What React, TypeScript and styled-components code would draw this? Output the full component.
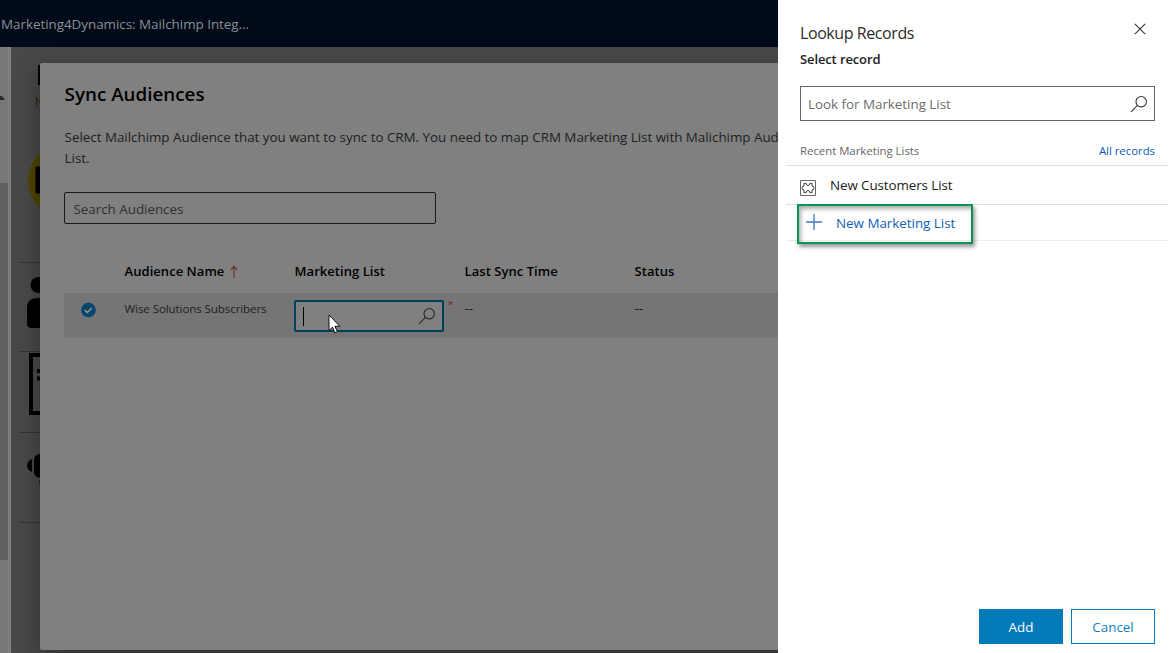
import React from 'react';
import styled, { createGlobalStyle } from 'styled-components';

const Global = createGlobalStyle`
  *, *::before, *::after { box-sizing: border-box; }
  body { margin: 0; overflow: hidden; }
  svg { display: block; flex: none; }
`;

const Page = styled.div`
  display: flex;
  width: 1170px;
  height: 653px;
  overflow: hidden;
  font-family: 'Open Sans', 'Noto Sans', sans-serif;
  font-size: 13.4px;
  letter-spacing: -0.02px;
  white-space: nowrap;
`;

const Workspace = styled.div`
  position: relative;
  display: flex;
  flex-direction: column;
  width: 778px;
  overflow: hidden;
  background: #484848;
`;

const TopBar = styled.header`
  display: flex;
  align-items: center;
  flex: none;
  height: 47px;
  padding: 0 0 0 1px;
  background: #000a18;
  color: #8c8f93;
`;

const Body = styled.div`
  display: flex;
  flex: 1;
`;

const ScrollRail = styled.div`
  width: 11px;
  padding-top: 49px;
  background: #787878;
  border-right: 3px solid #808080;
`;

const RailArrow = styled.div`
  width: 5px;
  height: 4px;
  background: #2b2b2b;
  clip-path: polygon(0 0, 40% 0, 100% 100%, 0 100%);
`;

const RailThumb = styled.div`
  width: 8px;
  height: 377px;
  margin-top: 83px;
  background: #606060;
`;

const SideList = styled.div`
  display: flex;
  flex-direction: column;
  width: 29px;
  padding-left: 8px;
`;

const SideItem = styled.div<{ $height: number }>`
  flex: none;
  height: ${(p) => p.$height}px;
  border-bottom: 1px solid #343434;
`;

const Dialog = styled.section`
  position: absolute;
  left: 40px;
  top: 63px;
  width: 760px;
  height: 587px;
  padding: 18px 0 0 24px;
  border-radius: 2px;
  background: #808080;
  box-shadow: 0 6px 22px rgba(0, 0, 0, 0.35);
  color: #000;
`;

const DialogTitle = styled.h1`
  margin: 0;
  padding-left: 0.6px;
  font-size: 18.8px;
  font-weight: 600;
  line-height: 26px;
  letter-spacing: 0.01px;
`;

const Description = styled.p`
  margin: 20px 0 0;
  padding-left: 0.6px;
  color: #1d1f21;
  line-height: 21px;
`;

const AudienceSearch = styled.div`
  display: flex;
  align-items: center;
  width: 372px;
  height: 32px;
  margin-top: 23px;
  padding: 2px 8px 0 8.5px;
  border: 1px solid #191919;
  border-radius: 2px;
  color: #2f2f2f;
`;

const GridHead = styled.div`
  display: grid;
  grid-template-columns: 60px 170px 170px 170px 1fr;
  height: 69px;
  padding: 37px 0 0 0.6px;
  font-size: 13px;
  font-weight: 600;
  line-height: 20px;
  letter-spacing: 0.04px;
`;

const HeadCell = styled.div<{ $start?: number }>`
  display: flex;
  gap: 6px;
  grid-column-start: ${(p) => p.$start ?? 'auto'};
`;

const GridRow = styled.div`
  display: grid;
  grid-template-columns: 60px 170px 170px 170px 1fr;
  height: 45px;
  background: #757575;
`;

const CheckCell = styled.div`
  padding: 9px 0 0 16px;
`;

const NameCell = styled.div`
  padding: 6px 0 0 0.5px;
  color: #1f1f1f;
  font-size: 11.6px;
  line-height: 20px;
  letter-spacing: -0.11px;
`;

const ValueCell = styled.div`
  padding: 5px 0 0 0.5px;
  color: #151515;
  line-height: 20px;
`;

const FieldCell = styled.div`
  display: flex;
  gap: 4px;
  padding-top: 7px;
`;

const LookupField = styled.div`
  display: flex;
  align-items: center;
  justify-content: space-between;
  width: 150px;
  height: 32px;
  padding: 0 6px 0 7px;
  border: 2px solid #003e5d;
  border-radius: 2px;
  background: #808080;
`;

const Caret = styled.span`
  width: 1px;
  height: 19px;
  background: #000;
`;

const Required = styled.span`
  margin-top: -2px;
  color: #7a1a20;
  font-size: 9.5px;
  line-height: 14px;
`;

const Pointer = styled.div`
  position: absolute;
  left: 288px;
  top: 251px;
`;

const Drawer = styled.aside`
  display: flex;
  flex-direction: column;
  width: 392px;
  padding-right: 1px;
  background: #fff;
  color: #212121;
`;

const DrawerHead = styled.div`
  display: flex;
  justify-content: space-between;
  padding: 21px 23px 0 22px;
  svg { margin-top: 1px; }
`;

const DrawerTitle = styled.h2`
  margin: 0;
  color: #2b2b2b;
  font-size: 16px;
  font-weight: 400;
  line-height: 24px;
  letter-spacing: -0.42px;
`;

const DrawerSubtitle = styled.div`
  margin-top: 4px;
  font-size: 13px;
  font-weight: 600;
  line-height: 20px;
  letter-spacing: -0.12px;
`;

const RecordSearch = styled.div`
  display: flex;
  align-items: center;
  justify-content: space-between;
  height: 35px;
  margin: 17px 14px 0 22px;
  padding: 0 6px 0 7px;
  border: 1px solid #666;
  color: #6c6c6c;
`;

const RecentBar = styled.div`
  display: flex;
  align-items: center;
  justify-content: space-between;
  height: 45px;
  margin-left: 8px;
  padding: 15px 14px 0 14px;
  border-bottom: 1px solid #e1e1e1;
  color: #666;
  font-size: 11.4px;
`;

const Link = styled.a`
  color: #0a5ab4;
`;

const Records = styled.div`
  margin-left: 8px;
`;

const RecordRow = styled.div`
  display: flex;
  align-items: center;
  gap: 14px;
  height: 39px;
  padding-left: 14px;
  border-bottom: 1px solid #e1e1e1;
  color: #212121;
  letter-spacing: -0.09px;
  svg { margin-top: 5px; }
`;

const NewRecordRow = styled.div`
  position: relative;
  display: flex;
  align-items: center;
  gap: 14px;
  height: 36px;
  padding-left: 20px;
  border-bottom: 1px solid #ededed;
  color: #1160b7;
  svg { margin-top: -1px; }
`;

const Highlight = styled.div`
  position: absolute;
  left: 11px;
  top: -1px;
  width: 176px;
  height: 40px;
  border: 2px solid #079551;
  box-shadow: 2px 3px 4px rgba(0, 0, 0, 0.4), inset 2px 3px 4px rgba(0, 0, 0, 0.33);
`;

const Footer = styled.div`
  display: flex;
  justify-content: flex-end;
  gap: 8px;
  margin-top: auto;
  padding: 0 14px 9px;
`;

const Button = styled.button<{ $primary?: boolean }>`
  width: 84px;
  height: 35px;
  padding: 1px 0 0;
  border: 1px solid #007ab8;
  background: ${(p) => (p.$primary ? '#007ab8' : '#fff')};
  color: ${(p) => (p.$primary ? '#fff' : '#0f7ebb')};
  font: inherit;
  letter-spacing: -0.02px;
`;

const Magnifier = ({ color }: { color: string }) => (
  <svg width="18" height="18" viewBox="0 0 18 18" fill="none" stroke={color} strokeWidth="1.1">
    <circle cx="11.2" cy="6.7" r="5.2" />
    <path d="M7.5 10.4 1 16.9" />
  </svg>
);

const SideArt = styled.svg`
  position: absolute;
  left: 27px;
  top: 63px;
`;

const SideGlyphs = () => (
  <SideArt width="13" height="440" viewBox="27 63 13 440">
    <path d="M38 65h2v20h-2z" fill="#050505" />
    <path d="M36.500 107V97.500L40 103" fill="none" stroke="#33270e" strokeWidth="1.2" />
    <circle cx="65.500" cy="180.500" r="37.500" fill="#4d4500" />
    <path d="M35.500 166.500h5v27h-5z" fill="#000" />
    <circle cx="38.500" cy="285" r="8" fill="#000" />
    <path d="M27 308q0-10 10-10h4v30h-9q-5 0-5-5z" fill="#000" />
    <path d="M40 355H31v58h9M37 371h4M37 378.500h4" fill="none" stroke="#000" strokeWidth="4" />
    <path d="M32 459q-5 2.500-5 6.500t5 6.500z" fill="#000" />
    <path d="M40 454q-6 1-6 6v12q0 5 6 6z" fill="#000" />
    <path d="M39 480h1v6z" fill="#222" />
  </SideArt>
);

export default function App() {
  return (
    <Page>
      <Global />
      <Workspace>
        <TopBar>Marketing4Dynamics: Mailchimp Integ...</TopBar>
        <Body>
          <ScrollRail>
            <RailArrow />
            <RailThumb />
          </ScrollRail>
          <SideList>
            <SideItem $height={216} />
            <SideItem $height={89} />
            <SideItem $height={81} />
            <SideItem $height={90} />
          </SideList>
        </Body>
        <SideGlyphs />
        <Dialog>
          <DialogTitle>Sync Audiences</DialogTitle>
          <Description>
            Select Mailchimp Audience that you want to sync to CRM. You need to map CRM Marketing List with Malichimp
            Audience
            <br />
            List.
          </Description>
          <AudienceSearch>Search Audiences</AudienceSearch>
          <GridHead>
            <HeadCell $start={2}>
              Audience Name
              <svg width="8" height="20" viewBox="0 0 8 20" fill="none" stroke="#6e3418" strokeWidth="1.2">
                <path d="M4 17V5.500M1 8.500l3-3.200 3 3.200" />
              </svg>
            </HeadCell>
            <HeadCell>Marketing List</HeadCell>
            <HeadCell>Last Sync Time</HeadCell>
            <HeadCell>Status</HeadCell>
          </GridHead>
          <GridRow>
            <CheckCell>
              <svg width="17" height="17" viewBox="0 0 17 17">
                <circle cx="8.400" cy="8" r="8.300" fill="#808080" />
                <circle cx="8.400" cy="8" r="7.500" fill="#0a476b" />
                <path d="m4.800 8 2.500 2.500 4.500-4.600" fill="none" stroke="#9a9a9a" strokeWidth="1.500" />
              </svg>
            </CheckCell>
            <NameCell>Wise Solutions Subscribers</NameCell>
            <FieldCell>
              <LookupField>
                <Caret />
                <Magnifier color="#262626" />
              </LookupField>
              <Required>*</Required>
            </FieldCell>
            <ValueCell>--</ValueCell>
            <ValueCell>--</ValueCell>
          </GridRow>
          <Pointer>
            <svg width="13" height="20" viewBox="0 0 13 20">
              <path
                d="M1 1v15.500l3.500-3.300 2.400 5.600 2.500-1.100-2.400-5.400h4.800z"
                fill="#fff"
                stroke="#111"
                strokeWidth="1"
              />
            </svg>
          </Pointer>
        </Dialog>
      </Workspace>
      <Drawer>
        <DrawerHead>
          <div>
            <DrawerTitle>Lookup Records</DrawerTitle>
            <DrawerSubtitle>Select record</DrawerSubtitle>
          </div>
          <svg width="12" height="14" viewBox="0 0 12 14" fill="none" stroke="#333" strokeWidth="1.100">
            <path d="m.8 1.800 10.400 10.400M11.200 1.800.8 12.200" />
          </svg>
        </DrawerHead>
        <RecordSearch>
          Look for Marketing List
          <Magnifier color="#333" />
        </RecordSearch>
        <RecentBar>
          Recent Marketing Lists
          <Link>All records</Link>
        </RecentBar>
        <Records>
          <RecordRow>
            <svg width="16" height="16" viewBox="0 0 16 16" fill="none" stroke="#666">
              <path d="M.5.500h15v15H.500z" />
              <path
                d="M4 3.500h2.300q-.5 2 1.700 2t1.700-2H12v2.600q2-.4 2 1.900t-2 1.900v2.600H9.700q.5-2-1.700-2t-1.700 2H4V9.900q-2 .4-2-1.900t2-1.900z"
                stroke="#444"
                strokeLinejoin="round"
              />
            </svg>
            New Customers List
          </RecordRow>
          <NewRecordRow>
            <svg width="16" height="16" viewBox="0 0 16 16" fill="none" stroke="#4276bf" strokeWidth="1.300">
              <path d="M8 0v16M0 8h16" />
            </svg>
            New Marketing List
            <Highlight />
          </NewRecordRow>
        </Records>
        <Footer>
          <Button $primary>Add</Button>
          <Button>Cancel</Button>
        </Footer>
      </Drawer>
    </Page>
  );
}
